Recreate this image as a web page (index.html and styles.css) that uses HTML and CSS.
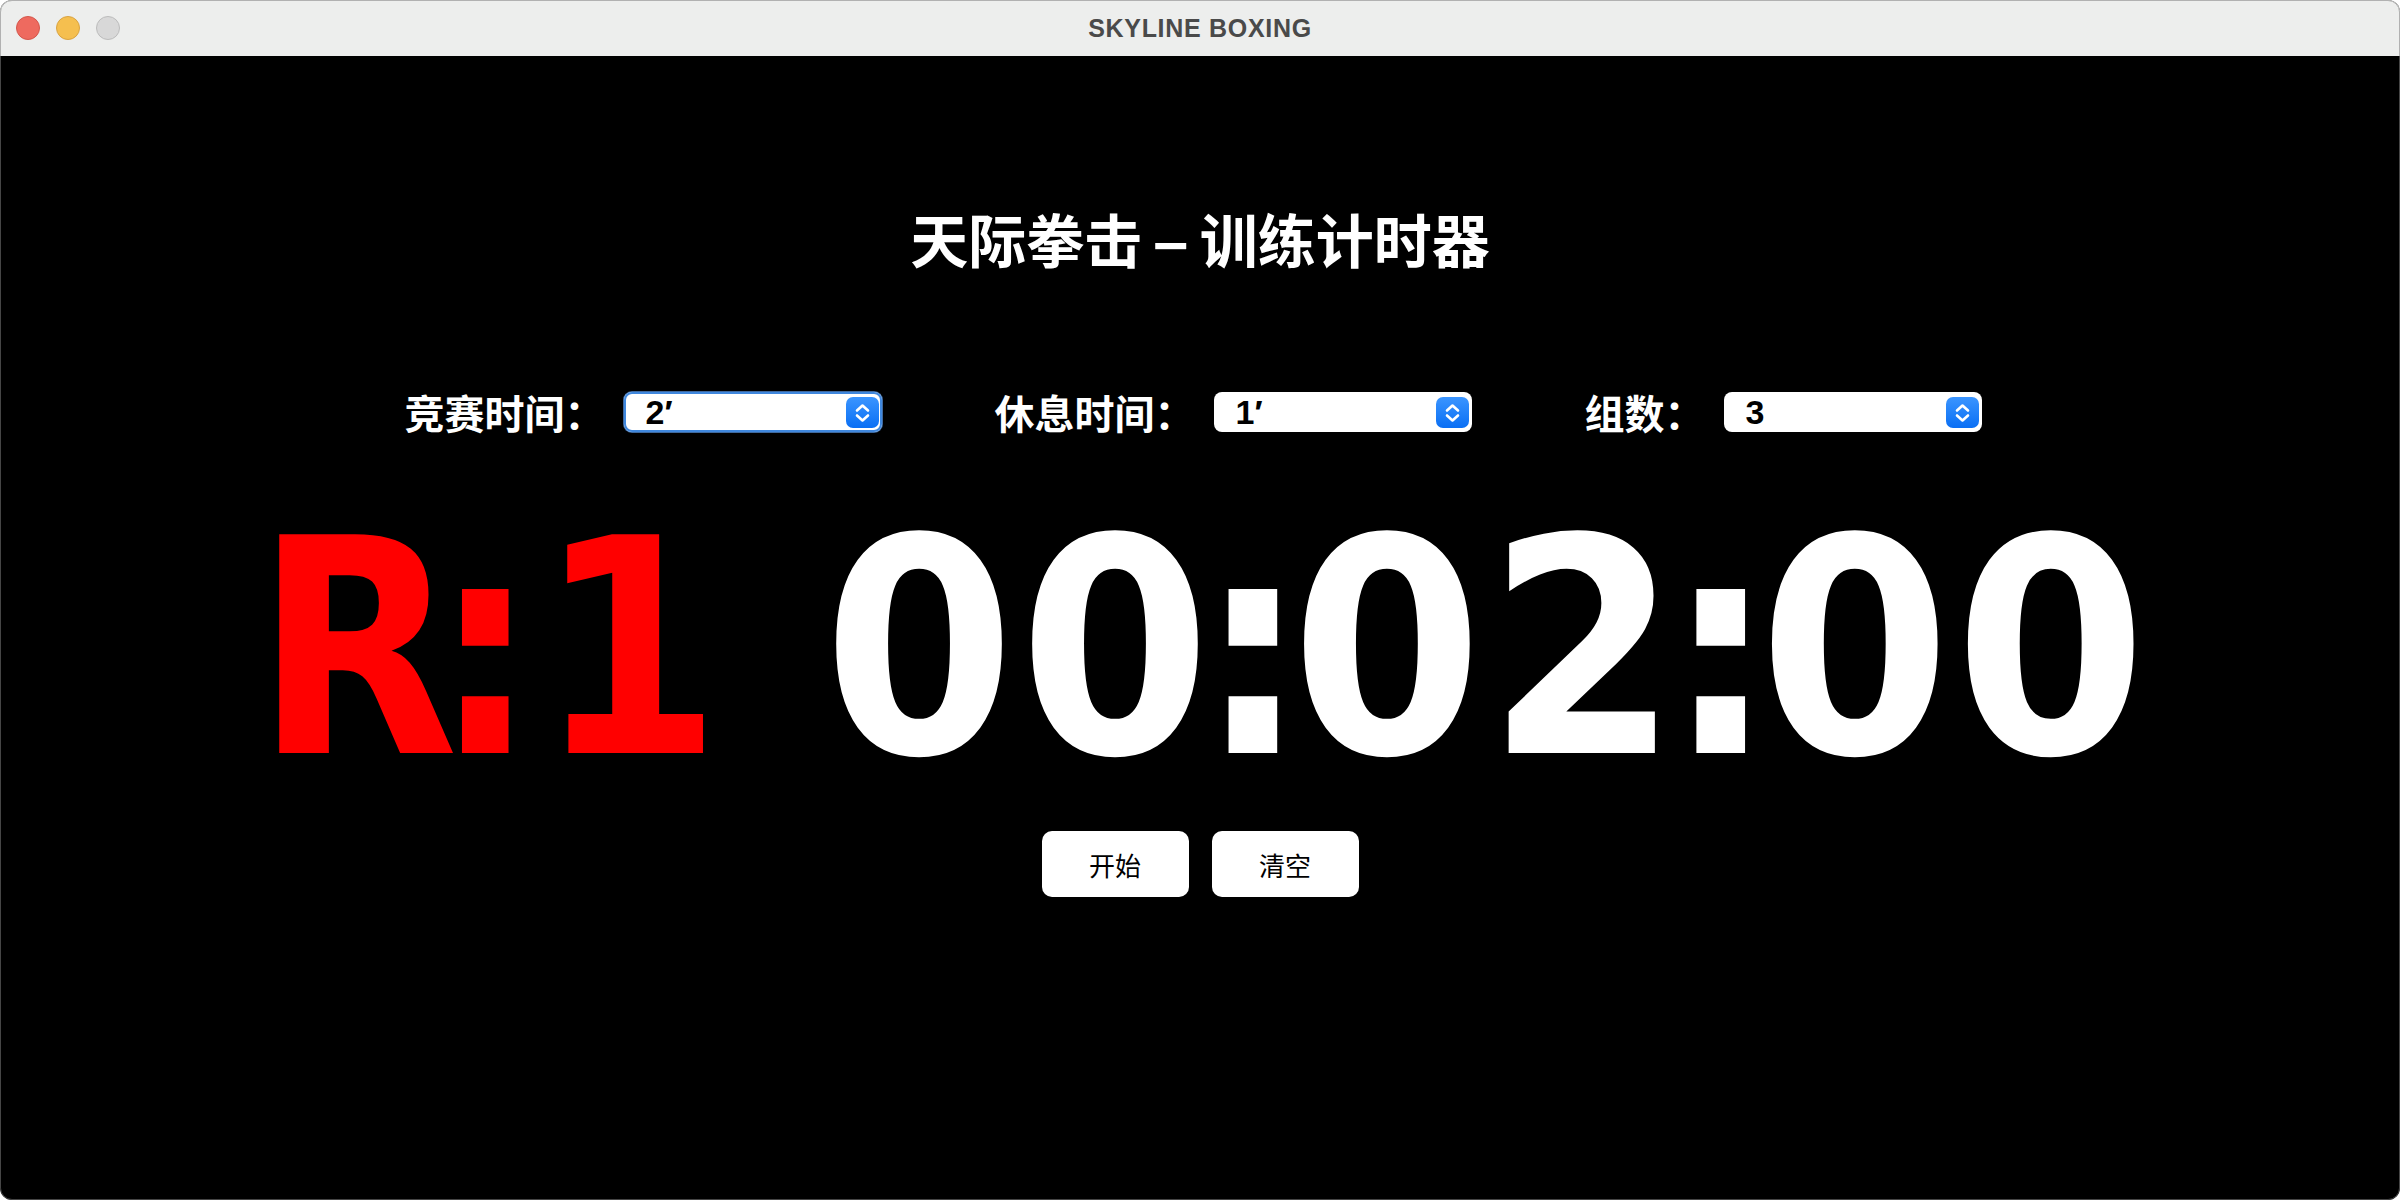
FILE: index.html
```html
<!DOCTYPE html>
<html lang="zh-CN">
<head>
<meta charset="utf-8">
<title>SKYLINE BOXING</title>
<link rel="stylesheet" href="styles.css">
</head>
<body>
<div class="window">
  <header class="titlebar">
    <div class="lights">
      <span class="light red"></span>
      <span class="light yellow"></span>
      <span class="light gray"></span>
    </div>
    <div class="wtitle">SKYLINE BOXING</div>
    <div class="spacer"></div>
  </header>
  <main class="content">
    <h1 class="title">天际拳击<span class="dash">-</span>训练计时器</h1>
    <div class="controls">
      <div class="field">
        <span class="lbl">竞赛时间：</span>
        <div class="select focus">
          <span class="val">2′</span>
          <span class="arrow"><svg width="33" height="31" viewBox="0 0 33 31"><polyline points="11,13.5 16.5,8.5 22,13.5" /><polyline points="11,18.5 16.5,23.5 22,18.5" /></svg></span>
        </div>
      </div>
      <div class="field">
        <span class="lbl">休息时间：</span>
        <div class="select">
          <span class="val">1′</span>
          <span class="arrow"><svg width="33" height="31" viewBox="0 0 33 31"><polyline points="11,13.5 16.5,8.5 22,13.5" /><polyline points="11,18.5 16.5,23.5 22,18.5" /></svg></span>
        </div>
      </div>
      <div class="field">
        <span class="lbl">组数：</span>
        <div class="select">
          <span class="val">3</span>
          <span class="arrow"><svg width="33" height="31" viewBox="0 0 33 31"><polyline points="11,13.5 16.5,8.5 22,13.5" /><polyline points="11,18.5 16.5,23.5 22,18.5" /></svg></span>
        </div>
      </div>
    </div>
    <div class="big">
      <div class="round"><span class="tx rx">R<span class="rc">:</span>1</span></div>
      <div class="timer"><span class="tx dx">0<span class="pre">0</span><span class="col">:</span>0<span class="pre">2</span><span class="col">:</span>00</span></div>
    </div>
    <div class="buttons">
      <button class="btn">开始</button>
      <button class="btn">清空</button>
    </div>
  </main>
</div>
</body>
</html>
```
FILE: styles.css
```css
* { box-sizing: border-box; }
html, body { margin: 0; padding: 0; }
body {
  background: #ffffff;
  width: 2400px;
  height: 1200px;
  overflow: hidden;
  font-family: "Noto Sans CJK SC", "Noto Sans", sans-serif;
}
.window {
  position: relative;
  width: 2400px;
  height: 1200px;
  border-radius: 12px;
  overflow: hidden;
  background: #000;
  display: flex;
  flex-direction: column;
}
.window::after {
  content: "";
  position: absolute;
  inset: 0;
  border-radius: 12px;
  border: 1px solid rgba(128,128,128,0.55);
  pointer-events: none;
}
.titlebar {
  height: 56px;
  flex: none;
  background: #edeeed;
  display: grid;
  grid-template-columns: 1fr auto 1fr;
  align-items: center;
}
.lights {
  display: flex;
  gap: 16px;
  padding-left: 16px;
  align-items: center;
}
.light {
  width: 24px;
  height: 24px;
  border-radius: 50%;
  border: 1px solid;
}
.red { background: #ee6a5f; border-color: #d4574c; }
.yellow { background: #f5bf4f; border-color: #d9a342; }
.gray { background: #d8d8d8; border-color: #bcbcbc; }
.wtitle {
  font-family: "Liberation Sans", Arial, sans-serif;
  font-weight: 700;
  font-size: 25px;
  letter-spacing: 0.7px;
  color: #4a4a4a;
  line-height: 54px;
}
.content {
  flex: 1;
  display: flex;
  flex-direction: column;
  align-items: center;
}
.title {
  margin: 152px 0 0 0;
  font-size: 58px;
  line-height: 60px;
  font-weight: 700;
  color: #fff;
  white-space: nowrap;
}
.dash {
  display: inline-block;
  margin: 0 18px;
  transform: scaleX(1.95);
}
.controls {
  margin-top: 124px;
  display: flex;
  gap: 113px;
  align-items: center;
  padding-right: 14px;
}
.field {
  display: flex;
  gap: 19px;
  align-items: center;
}
.lbl {
  font-size: 40px;
  line-height: 40px;
  font-weight: 700;
  color: #fff;
  white-space: nowrap;
}
.select {
  width: 258px;
  height: 40px;
  background: #fff;
  border-radius: 8px;
  display: flex;
  align-items: center;
  justify-content: space-between;
  padding: 0 3px 0 22px;
}
.select.focus {
  box-shadow: inset 0 0 0 2px #3f87dd, 0 0 0 1px rgba(90,150,225,0.7);
}
.val {
  font-family: "Liberation Sans", Arial, sans-serif;
  font-weight: 700;
  font-size: 34px;
  line-height: 40px;
  color: #000;
}
.arrow {
  width: 33px;
  height: 31px;
  border-radius: 7px;
  background: linear-gradient(#3b95ff, #0a6ff4);
  display: flex;
}
.arrow polyline {
  fill: none;
  stroke: #fff;
  stroke-width: 2.6;
  stroke-linecap: round;
  stroke-linejoin: round;
}
.big {
  margin-top: 68px;
  display: flex;
  gap: 86px;
  padding-left: 15px;
  font-family: "DejaVu Sans", sans-serif;
  font-weight: 700;
  font-size: 300px;
  line-height: 300px;
  white-space: nowrap;
}
.round { flex: none; width: 469px; color: #ff0000; }
.timer { flex: none; width: 1328px; color: #fff; }
.tx {
  display: inline-block;
  transform-origin: 0 50%;
}
.rx {
  letter-spacing: -29.35px;
  transform: translateX(-11px) scaleX(0.88);
}
.rc { letter-spacing: -0.65px; }
.dx {
  letter-spacing: 4.24px;
  transform: translateX(2px) scaleX(0.92);
}
.pre { letter-spacing: -14.46px; }
.col { letter-spacing: -18.7px; }
.buttons {
  margin-top: 31px;
  display: flex;
  gap: 23px;
}
.btn {
  width: 147px;
  height: 66px;
  border: none;
  border-radius: 10px;
  background: #fff;
  color: #000;
  font-family: "Noto Sans CJK SC", sans-serif;
  font-size: 26px;
  padding: 0;
}
```
